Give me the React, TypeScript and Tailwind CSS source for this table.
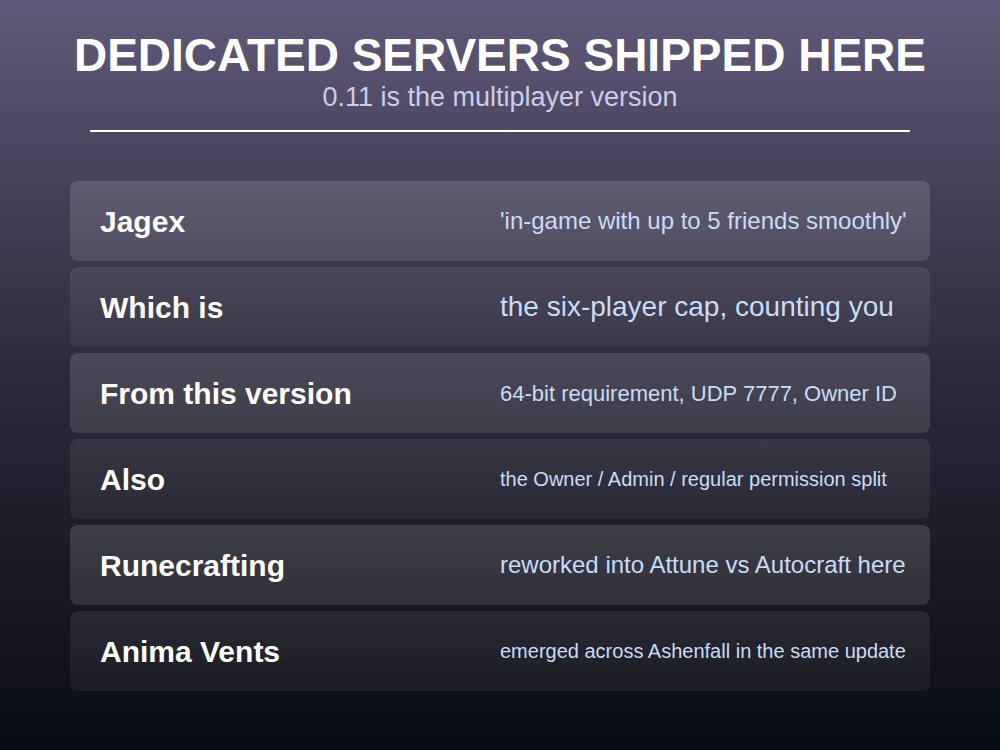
const rows = [
  { label: "Jagex", value: "'in-game with up to 5 friends smoothly'", size: "text-[24px]", odd: true },
  { label: "Which is", value: "the six-player cap, counting you", size: "text-[28px]", odd: false },
  { label: "From this version", value: "64-bit requirement, UDP 7777, Owner ID", size: "text-[22px]", odd: true },
  { label: "Also", value: "the Owner / Admin / regular permission split", size: "text-[20px]", odd: false },
  { label: "Runecrafting", value: "reworked into Attune vs Autocraft here", size: "text-[24px]", odd: true },
  { label: "Anima Vents", value: "emerged across Ashenfall in the same update", size: "text-[20px]", odd: false },
];

export default function App() {
  return (
    <div
      className="w-[1000px] h-[750px] flex flex-col items-center bg-gradient-to-b from-[#615a7a] via-[#2c2a3a] to-[#0a0c15] overflow-hidden"
      style={{ fontFamily: '"Liberation Sans", Arial, sans-serif' }}
    >
      {/* Header */}
      <h1 className="mt-[27px] text-[46px] leading-[56px] font-bold text-white">
        DEDICATED SERVERS SHIPPED HERE
      </h1>
      <p className="text-[27px] leading-[30px] -mt-[1px] text-[#cccdec]">0.11 is the multiplayer version</p>
      <div className="mt-[18px] w-[820px] h-[2px] bg-white" />

      {/* Rows */}
      <div className="mt-[49px] w-[860px] flex flex-col gap-[6px]">
        {rows.map((row) => (
          <div
            key={row.label}
            className={`h-[80px] rounded-lg flex items-center pl-[30px] bg-gradient-to-b ${
              row.odd ? "from-white/[0.14] to-white/[0.11]" : "from-white/[0.08] to-white/[0.05]"
            }`}
          >
            <div className="w-[400px] text-[30px] font-bold text-white">{row.label}</div>
            <div className={`${row.size} text-[#c9ddf6] whitespace-nowrap`}>{row.value}</div>
          </div>
        ))}
      </div>
    </div>
  );
}
